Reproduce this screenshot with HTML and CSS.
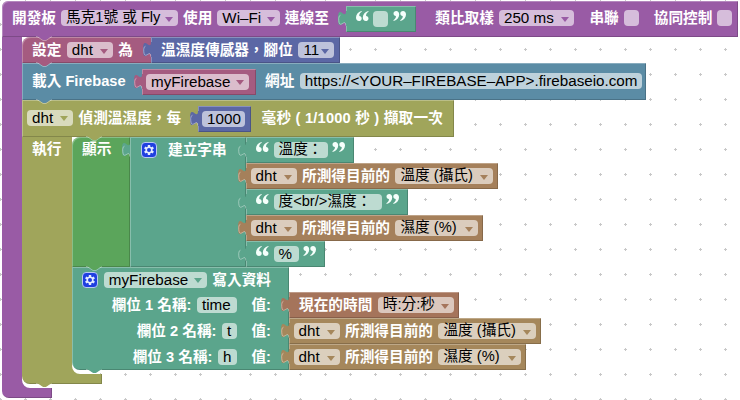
FILE: index.html
```html
<!DOCTYPE html>
<html lang="zh-Hant">
<head>
<meta charset="utf-8">
<title>Blocks</title>
<link rel="stylesheet" href="styles.css">
</head>
<body>
<svg class="grid" width="740" height="400" aria-hidden="true">
  <defs>
    <pattern id="dots" width="25" height="25" patternUnits="userSpaceOnUse" x="-12" y="-13">
      <path d="M11 12.5h3M12.5 11v3" stroke="#c8c8c8" stroke-width="1"/>
    </pattern>
    <symbol id="tab" viewBox="0 0 9 17">
      <path d="M9 16H8C8 6 0 24 0 8.500S8 11 8 1H9Z" fill="var(--c)"/>
      <path d="M7.700 15.500C7.500 7 .7 21.500 .7 8.500Q.7 5.500 2.500 5.200" fill="none" stroke="#fff" stroke-opacity=".4"/>
    </symbol>
    <symbol id="notch" viewBox="0 0 17 6">
      <path d="M1 0L7 4H10L16 0Z" fill="var(--c)"/>
      <path d="M0 .5H1L7 4.500H10L16 .5" fill="none" stroke="#fff" stroke-opacity=".35"/>
    </symbol>
    <symbol id="fillet" viewBox="0 0 8 8">
      <path d="M0 0A8 8 0 0 0 8 8H0Z" fill="var(--c)"/>
    </symbol>
    <symbol id="quote" viewBox="0 0 13 10">
      <path d="M5.500 0C2 1.200 0 3.500 0 6.500C0 8.600 1.200 10 3 10C4.600 10 5.700 8.900 5.700 7.400C5.700 5.900 4.700 4.900 3.300 4.900C3.100 3.200 4 1.700 5.800.7Z"/>
      <path d="M12.300 0C8.800 1.200 6.800 3.500 6.800 6.500C6.800 8.600 8 10 9.800 10C11.400 10 12.500 8.900 12.500 7.400C12.500 5.900 11.500 4.900 10.100 4.900C9.900 3.200 10.800 1.700 12.600.7Z"/>
    </symbol>
    <symbol id="gear" viewBox="0 0 16 16">
      <rect x=".5" y=".5" width="15" height="15" rx="3.500" fill="#1f3fe0" stroke="#b9c8f0"/>
      <g stroke="#e4ebff" stroke-width="2.400">
        <path d="M8 3V13M3.670 5.500L12.330 10.500M3.670 10.500L12.330 5.500"/>
      </g>
      <circle cx="8" cy="8" r="3.500" fill="#e4ebff"/>
      <circle cx="8" cy="8" r="2" fill="#1f3fe0"/>
    </symbol>
  </defs>
  <rect width="740" height="400" fill="url(#dots)"/>
</svg>

<main class="workspace">
  <section class="board purple">
    <header class="row tall board-head">
      <span class="label">開發板</span>
      <span class="field drop w-board">馬克1號 或 Fly</span>
      <span class="label">使用</span>
      <span class="field drop latin w-wifi">Wi–Fi</span>
      <span class="label">連線至</span>
      <div class="value text-block teal gap-value w-emptytext"><svg class="tab"><use href="#tab"/></svg><svg class="quote"><use href="#quote"/></svg><span class="field w-check"></span><svg class="quote close"><use href="#quote"/></svg></div>
      <span class="label gap-sample">類比取樣</span>
      <span class="field drop latin w-ms">250 ms</span>
      <span class="label gap-section">串聯</span>
      <span class="field w-check"></span>
      <span class="label gap-section">協同控制</span>
      <span class="field w-check"></span>
    </header>

    <div class="board-body">
      <section class="row statement set-block red">
        <svg class="notch purple"><use href="#notch"/></svg>
        <span class="label">設定</span>
        <span class="field drop latin w-dht">dht</span>
        <span class="label">為</span>
        <div class="value indigo end w-sensor"><svg class="tab"><use href="#tab"/></svg><span class="label">溫濕度傳感器，腳位</span><span class="field drop latin w-pin">11</span></div>
      </section>

      <section class="row tall statement load-block blue">
        <svg class="notch red"><use href="#notch"/></svg>
        <span class="label w-load">載入 Firebase</span>
        <div class="value red gap-value w-var"><svg class="tab"><use href="#tab"/></svg><span class="field drop latin w-firebase">myFirebase</span></div>
        <span class="label gap-text">網址</span>
        <span class="field latin w-url">https://&lt;YOUR–FIREBASE–APP&gt;.firebaseio.com</span>
      </section>

      <section class="detect olive">
        <header class="row tall statement detect-head">
          <svg class="notch blue"><use href="#notch"/></svg>
          <span class="field drop latin w-dht">dht</span>
          <span class="label">偵測溫濕度，每</span>
          <div class="value indigo gap-number w-number"><svg class="tab"><use href="#tab"/></svg><span class="field latin w-thousand">1000</span></div>
          <span class="label gap-ms w-ms-label">毫秒 ( 1/1000 秒 ) 擷取一次</span>
        </header>

        <div class="detect-body">
          <div class="do-column"><span class="label">執行</span></div>
          <div class="stack">
            <section class="show-block">
              <div class="show-head statement green">
                <svg class="notch olive"><use href="#notch"/></svg>
                <span class="label">顯示</span>
              </div>
              <div class="join teal">
                <svg class="tab"><use href="#tab"/></svg>
                <div class="join-head">
                  <svg class="gear"><use href="#gear"/></svg>
                  <span class="label">建立字串</span>
                </div>
                <div class="join-items">
                  <div class="value text-block teal w-temp-block"><svg class="tab"><use href="#tab"/></svg><svg class="quote"><use href="#quote"/></svg><span class="field w-temp">溫度：</span><svg class="quote close"><use href="#quote"/></svg></div>
                  <div class="value brown w-celsius-block"><svg class="tab"><use href="#tab"/></svg><span class="field drop latin w-dht">dht</span><span class="label">所測得目前的</span><span class="field drop w-celsius">溫度 (攝氏)</span></div>
                  <div class="value text-block teal w-break-block"><svg class="tab"><use href="#tab"/></svg><svg class="quote"><use href="#quote"/></svg><span class="field w-break">度&lt;br/&gt;濕度：</span><svg class="quote close"><use href="#quote"/></svg></div>
                  <div class="value brown w-humid-block"><svg class="tab"><use href="#tab"/></svg><span class="field drop latin w-dht">dht</span><span class="label">所測得目前的</span><span class="field drop w-humid">濕度 (%)</span></div>
                  <div class="value text-block teal w-percent-block"><svg class="tab"><use href="#tab"/></svg><svg class="quote"><use href="#quote"/></svg><span class="field latin w-percent">%</span><svg class="quote close"><use href="#quote"/></svg></div>
                </div>
              </div>
            </section>

            <section class="write">
              <div class="write-main statement teal">
                <svg class="notch green"><use href="#notch"/></svg>
                <svg class="notch out teal"><use href="#notch"/></svg>
                <div class="write-row first">
                  <svg class="gear"><use href="#gear"/></svg>
                  <span class="field drop latin w-firebase">myFirebase</span>
                  <span class="label">寫入資料</span>
                </div>
                <div class="write-row"><span class="label">欄位 1 名稱:</span><span class="field latin w-time">time</span><span class="label val">值:</span></div>
                <div class="write-row"><span class="label">欄位 2 名稱:</span><span class="field latin w-t">t</span><span class="label val">值:</span></div>
                <div class="write-row"><span class="label">欄位 3 名稱:</span><span class="field latin w-h">h</span><span class="label val">值:</span></div>
              </div>
              <div class="write-values">
                <div class="value rust w-now-block"><svg class="tab"><use href="#tab"/></svg><span class="label">現在的時間</span><span class="field drop w-hms">時:分:秒</span></div>
                <div class="value tan w-celsius-block"><svg class="tab"><use href="#tab"/></svg><span class="field drop latin w-dht">dht</span><span class="label">所測得目前的</span><span class="field drop w-celsius">溫度 (攝氏)</span></div>
                <div class="value tan w-humid-block"><svg class="tab"><use href="#tab"/></svg><span class="field drop latin w-dht">dht</span><span class="label">所測得目前的</span><span class="field drop w-humid">濕度 (%)</span></div>
              </div>
            </section>
          </div>
          <svg class="fillet inner"><use href="#fillet"/></svg>
        </div>
        <footer class="detect-foot"><svg class="notch out"><use href="#notch"/></svg></footer>
      </section>
      <svg class="fillet outer"><use href="#fillet"/></svg>
    </div>
    <footer class="board-foot"></footer>
  </section>
</main>
</body>
</html>
```

FILE: styles.css
```css
* { box-sizing: border-box; }

body {
  margin: 0;
  width: 740px;
  height: 400px;
  overflow: hidden;
  background: #fff;
  font-family: "Liberation Sans", "Noto Sans CJK TC", sans-serif;
  font-size: 14.667px;
  line-height: 16px;
}

.grid { position: absolute; left: 0; top: 0; z-index: -1; }
.workspace { padding: 1px 0 0 2px; }

/* block colours */
.purple { --c: #995ba5; }
.red { --c: #a55b80; }
.indigo { --c: #5b67a5; }
.blue { --c: #5b8ca5; }
.olive { --c: #a0a55b; }
.green { --c: #5ba55b; }
.teal { --c: #5ba58c; }
.brown { --c: #a5805b; }
.tan { --c: #a5875b; }
.rust { --c: #a5745b; }

/* rows and blocks */
.row, .value, .join-head, .write-row {
  display: flex;
  align-items: center;
  gap: 5.5px;
}
.row, .value, .statement, .join-head {
  position: relative;
  background: var(--c);
  box-shadow: inset 1px 1px rgba(255,255,255,.28), inset -1px -1px rgba(0,0,0,.18);
}
.value { flex: none; height: 26px; padding-left: 4.5px; }
.value > .label:first-of-type:nth-child(2) { margin-left: 5.5px; }
.tall > .label, .tall > .field { margin-top: -2px; }
.value.text-block { padding-left: 10px; gap: 4.500px; }

.label {
  flex: none;
  color: #fff;
  font-weight: 700;
  white-space: pre;
}
.field {
  flex: none;
  height: 16px;
  padding-left: 5px;
  border-radius: 4px;
  background: rgba(255,255,255,.6);
  color: #000;
  line-height: 15px;
  white-space: pre;
}
.latin { font-size: 15.200px; }
.drop { display: flex; justify-content: space-between; padding-right: 5px; }
.drop::after {
  content: "";
  align-self: center;
  margin-top: 2px;
  border: 4.500px solid transparent;
  border-top: 5px solid var(--c);
  border-bottom: 0;
}

/* connectors and icons */
.tab { position: absolute; left: -8px; top: 4px; width: 9px; height: 17px; }
.notch { position: absolute; left: 14px; top: -1px; width: 17px; height: 6px; z-index: 2; }
.notch.out { top: auto; bottom: -5px; }
.quote { flex: none; width: 13px; height: 10px; margin-top: -6px; fill: #f5fffb; }
.quote.close { transform: rotate(180deg); }
.gear { flex: none; width: 16px; height: 16px; }
.fillet { position: absolute; left: 0; bottom: 0; width: 8px; height: 8px; }

/* board */
.board-head {
  width: 736px;
  height: 36px;
  padding-left: 10px;
  gap: 5px;
  border-radius: 6px 0 0;
}
.board-body {
  position: relative;
  height: 351px;
  border-left: 20px solid var(--c);
}
.board-foot {
  width: 50px;
  height: 10px;
  background: var(--c);
  border-radius: 0 0 0 7px;
  box-shadow: inset -1px -1px rgba(0,0,0,.18);
}

.set-block { width: 318px; height: 26px; padding-left: 10px; border-radius: 8px 0 0; }
.end { margin-left: auto; }
.load-block { width: 624px; height: 37px; padding-left: 10px; }

/* sensing loop */
.detect-head { width: 432px; height: 37px; padding-left: 5px; }
.detect-body { position: relative; display: flex; height: 237px; }
.do-column { width: 50px; padding: 4px 0 0 10px; background: var(--c); }
.fillet.inner { left: 50px; }
.detect-foot {
  position: relative;
  width: 80px;
  height: 10px;
  background: var(--c);
  border-radius: 0 0 0 8px;
  box-shadow: inset -1px -1px rgba(0,0,0,.18);
}
.show-block { display: flex; height: 130px; }
.show-head { width: 58px; padding: 4px 0 0 10px; border-radius: 8px 0 0; }
.join { position: relative; display: flex; }
.join-head { align-items: flex-start; width: 116px; padding: 5px 0 0 11px; gap: 11px; }
.write { display: flex; position: relative; z-index: 1; }
.write-main { width: 217px; height: 103px; border-radius: 0 0 0 8px; }
.write-row { height: 26px; justify-content: flex-end; padding-right: 18px; }
.write-row.first { height: 25px; }
.val { margin-left: 9px; }
.write-values { padding-top: 25px; }

/* spacing */
.gap-value { margin-left: 12px; }
.gap-number { margin-left: 11px; }
.gap-sample { margin-left: 14.500px; }
.gap-section { margin-left: 10px; }
.gap-text { margin-left: 4px; }
.gap-ms { margin-left: 5.500px; letter-spacing: .2px; }

/* field and block widths */
.w-board { width: 117px; }
.w-wifi { width: 62.500px; }
.w-emptytext { width: 70px; }
.w-check { width: 15px; }
.w-ms { width: 75.500px; }
.w-dht { width: 46px; }
.w-sensor { width: 189px; }
.w-pin { width: 36px; }
.w-load { width: 92px; }
.w-var { width: 114px; }
.w-firebase { width: 103px; }
.w-url { width: 342px; }
.w-number { width: 53px; }
.w-thousand { width: 43px; }
.w-ms-label { width: 182px; }
.w-temp-block { width: 108px; }
.w-temp { width: 54px; }
.w-celsius-block { width: 252px; }
.w-celsius { width: 98px; }
.w-break-block { width: 162px; }
.w-break { width: 108px; }
.w-humid-block { width: 237px; }
.w-humid { width: 83px; }
.w-percent-block { width: 79px; }
.w-percent { width: 25px; }
.w-now-block { width: 170px; }
.w-hms { width: 76px; }
.w-time { width: 40px; }
.w-t { width: 15px; }
.w-h { width: 19px; }
```
